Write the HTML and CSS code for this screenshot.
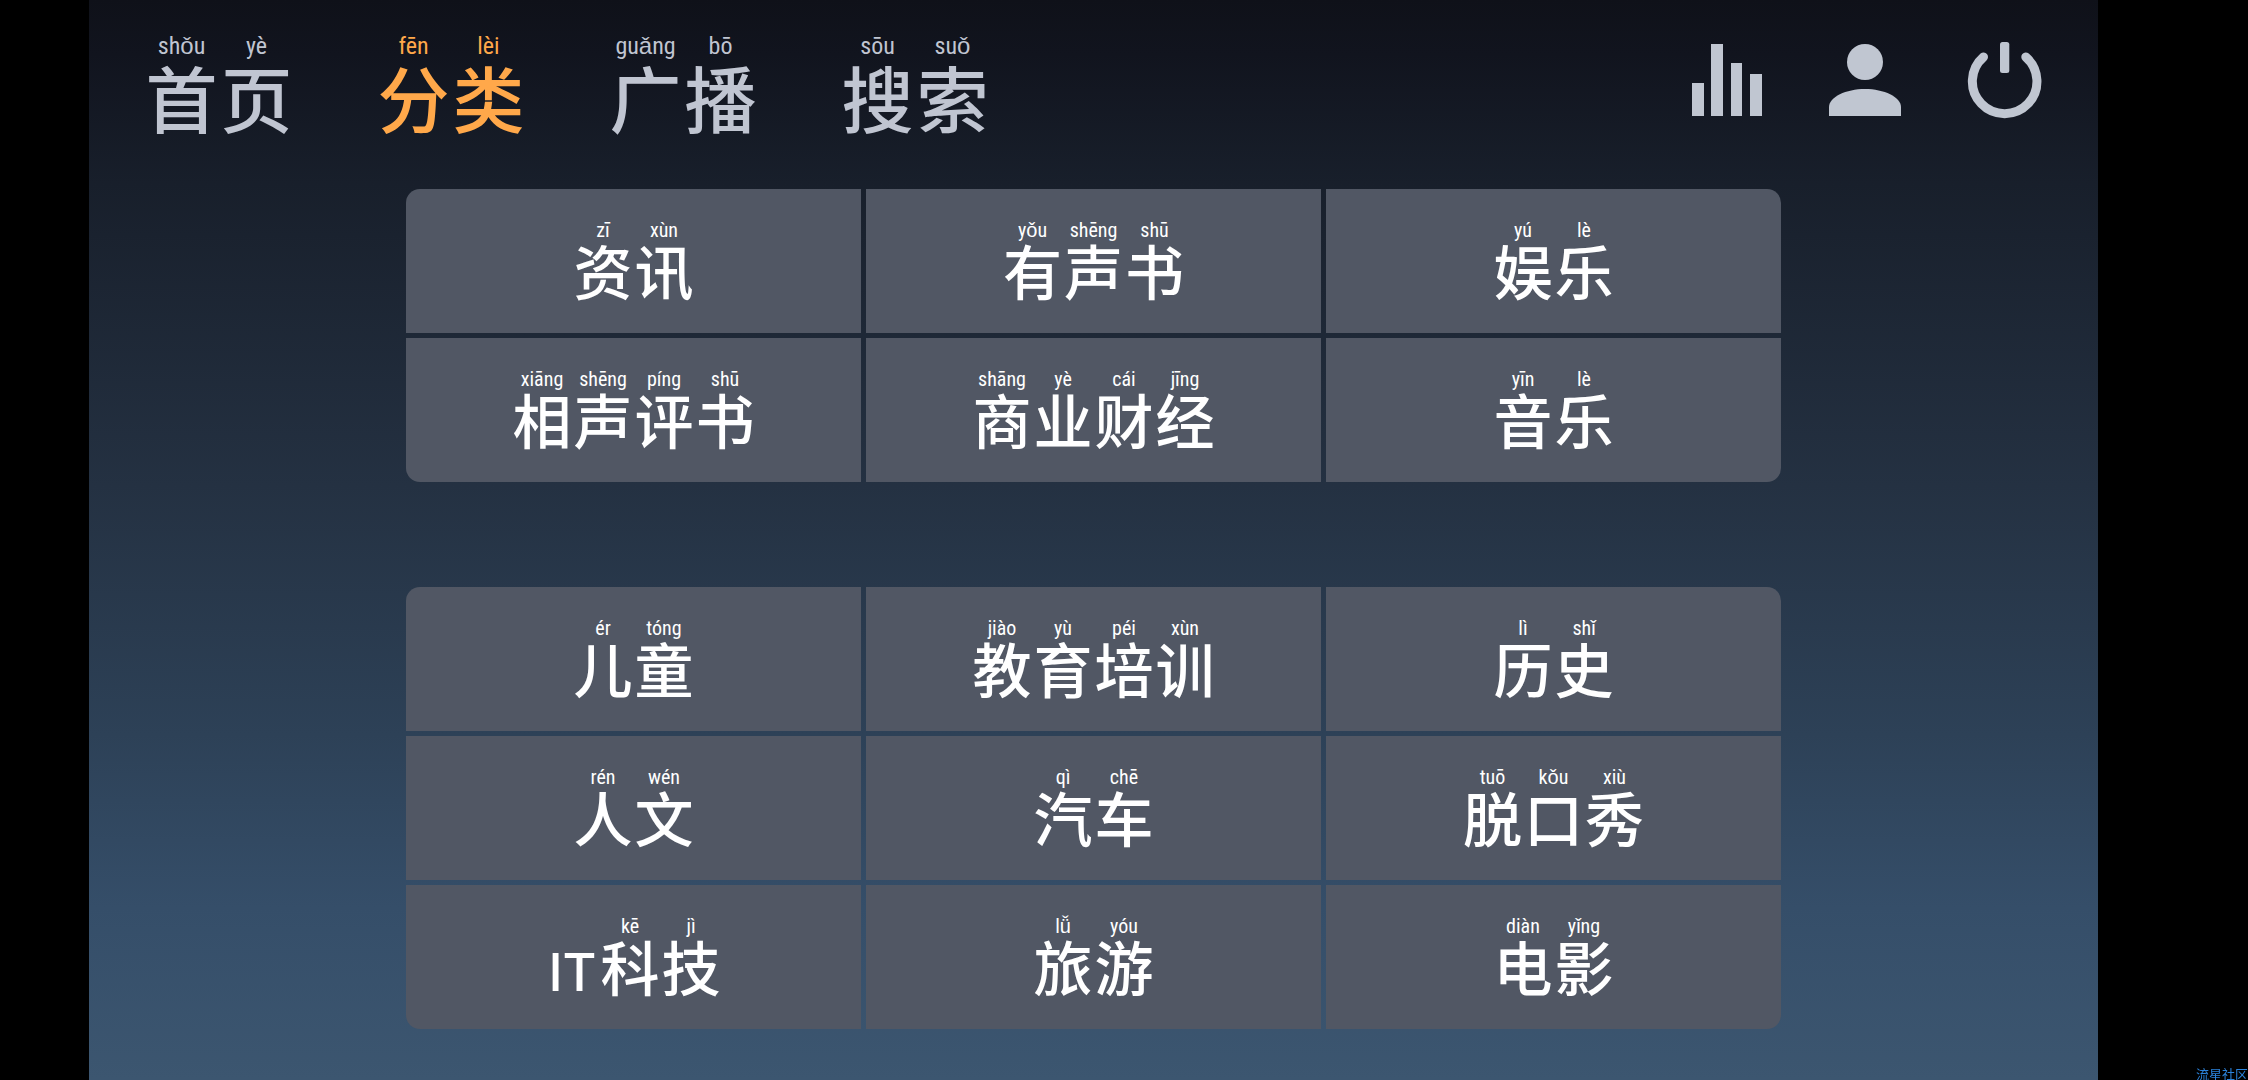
FILE: index.html
```html
<!DOCTYPE html>
<html lang="zh-CN">

<head>
  <meta charset="utf-8">
  <title>分类</title>
  <link rel="stylesheet" href="styles.css">
</head>

<body>
  <div class="app">
    <header class="header">
      <nav class="nav">
        <a href="#"><ruby>首<rt>shǒu</rt></ruby><ruby>页<rt>yè</rt></ruby></a>
        <a href="#" class="active"><ruby>分<rt>fēn</rt></ruby><ruby>类<rt>lèi</rt></ruby></a>
        <a href="#"><ruby>广<rt>guǎng</rt></ruby><ruby>播<rt>bō</rt></ruby></a>
        <a href="#"><ruby>搜<rt>sōu</rt></ruby><ruby>索<rt>suǒ</rt></ruby></a>
      </nav>
      <div class="tools">
        <button type="button" aria-label="播放">
          <svg viewBox="0 0 80 80">
            <path d="M5 43h12v33H5zM24 4h12v72H24zM44 23h11v53H44zM63 34h12v42H63z"/>
          </svg>
        </button>
        <button type="button" aria-label="我的">
          <svg viewBox="0 0 80 80">
            <circle cx="39" cy="22" r="18"/>
            <path d="M3 76V67C3 57 20 49 39 49S75 57 75 67V76z"/>
          </svg>
        </button>
        <button type="button" aria-label="关机">
          <svg viewBox="0 0 80 80">
            <rect x="35" y="2" width="9.300" height="31" rx="2.500"/>
            <path class="ring" d="M18.500 17A32.300 32.300 0 1 0 60.800 17"/>
          </svg>
        </button>
      </div>
    </header>

    <main class="main">
      <section class="group">
        <a href="#"><ruby>资<rt>zī</rt></ruby><ruby>讯<rt>xùn</rt></ruby></a>
        <a href="#"><ruby>有<rt>yǒu</rt></ruby><ruby>声<rt>shēng</rt></ruby><ruby>书<rt>shū</rt></ruby></a>
        <a href="#"><ruby>娱<rt>yú</rt></ruby><ruby>乐<rt>lè</rt></ruby></a>
        <a href="#"><ruby>相<rt>xiāng</rt></ruby><ruby>声<rt>shēng</rt></ruby><ruby>评<rt>píng</rt></ruby><ruby>书<rt>shū</rt></ruby></a>
        <a href="#"><ruby>商<rt>shāng</rt></ruby><ruby>业<rt>yè</rt></ruby><ruby>财<rt>cái</rt></ruby><ruby>经<rt>jīng</rt></ruby></a>
        <a href="#"><ruby>音<rt>yīn</rt></ruby><ruby>乐<rt>lè</rt></ruby></a>
      </section>

      <section class="group">
        <a href="#"><ruby>儿<rt>ér</rt></ruby><ruby>童<rt>tóng</rt></ruby></a>
        <a href="#"><ruby>教<rt>jiào</rt></ruby><ruby>育<rt>yù</rt></ruby><ruby>培<rt>péi</rt></ruby><ruby>训<rt>xùn</rt></ruby></a>
        <a href="#"><ruby>历<rt>lì</rt></ruby><ruby>史<rt>shǐ</rt></ruby></a>
        <a href="#"><ruby>人<rt>rén</rt></ruby><ruby>文<rt>wén</rt></ruby></a>
        <a href="#"><ruby>汽<rt>qì</rt></ruby><ruby>车<rt>chē</rt></ruby></a>
        <a href="#"><ruby>脱<rt>tuō</rt></ruby><ruby>口<rt>kǒu</rt></ruby><ruby>秀<rt>xiù</rt></ruby></a>
        <a href="#"><span class="latin">IT</span><ruby>科<rt>kē</rt></ruby><ruby>技<rt>jì</rt></ruby></a>
        <a href="#"><ruby>旅<rt>lǚ</rt></ruby><ruby>游<rt>yóu</rt></ruby></a>
        <a href="#"><ruby>电<rt>diàn</rt></ruby><ruby>影<rt>yǐng</rt></ruby></a>
      </section>
    </main>
  </div>
  <span class="watermark">流星社区</span>
</body>

</html>
```
FILE: styles.css
```css
* {
    box-sizing: border-box;
}
body {
    margin: 0;
    background: #000;
    font-family: "Noto Sans CJK SC", sans-serif;
    font-weight: 500;
}
a {
    color: inherit;
    text-decoration: none;
}

.app {
    min-height: 100vh;
    margin: 0 150px 0 89px;
    background: linear-gradient(#0f1119 0%, #11141e 5%, #181f2b 17%, #243142 45%, #2d4157 68%, #354e69 84%, #3c5670 100%);
}

/* pinyin above each character */
ruby {
    display: flex;
    flex-direction: column-reverse;
    align-items: center;
}
rt {
    font-family: "Roboto Condensed", "Liberation Sans", sans-serif;
    font-weight: 400;
    white-space: nowrap;
}

.header {
    display: flex;
    justify-content: space-between;
    padding: 33px 53px 0 55px;
    color: #c0c5d1;
}
.nav {
    display: flex;
    gap: 82px;
}
.nav a {
    display: flex;
    font-size: 72px;
    line-height: 74px;
}
.nav ruby {
    width: 75px;
}
.nav rt {
    height: 26px;
    font-size: 24px;
    line-height: 26px;
}
.nav .active {
    color: #ffa84a;
}

.tools {
    display: flex;
    gap: 59px;
    padding-top: 7px;
}
.tools button {
    width: 80px;
    height: 80px;
    padding: 0;
    border: 0;
    background: none;
    color: #c0c6d1;
    cursor: pointer;
}
.tools svg {
    display: block;
    fill: currentColor;
}
.tools .ring {
    fill: none;
    stroke: currentColor;
    stroke-width: 9;
    stroke-linecap: round;
}

.main {
    display: flex;
    flex-direction: column;
    gap: 105px;
    padding: 56px 317px 51px;
}
.group {
    display: grid;
    grid-template-columns: repeat(3, 1fr);
    gap: 5px;
    border-radius: 14px;
    overflow: hidden;
}
.group a {
    display: flex;
    justify-content: center;
    align-items: flex-end;
    padding: 31px 0 33px;
    background: #515764;
    color: #fff;
    font-size: 59px;
    line-height: 60px;
}
.group ruby {
    width: 61px;
}
.group rt {
    height: 20px;
    font-size: 20px;
    line-height: 20px;
}
.group .latin {
    padding: 0 3px;
    font-family: Inter, sans-serif;
    font-size: 52px;
    line-height: 46px;
}

.watermark {
    position: fixed;
    right: 0;
    bottom: 0;
    color: #2b83dc;
    font-size: 13px;
    font-weight: 400;
    line-height: 12px;
}
```
